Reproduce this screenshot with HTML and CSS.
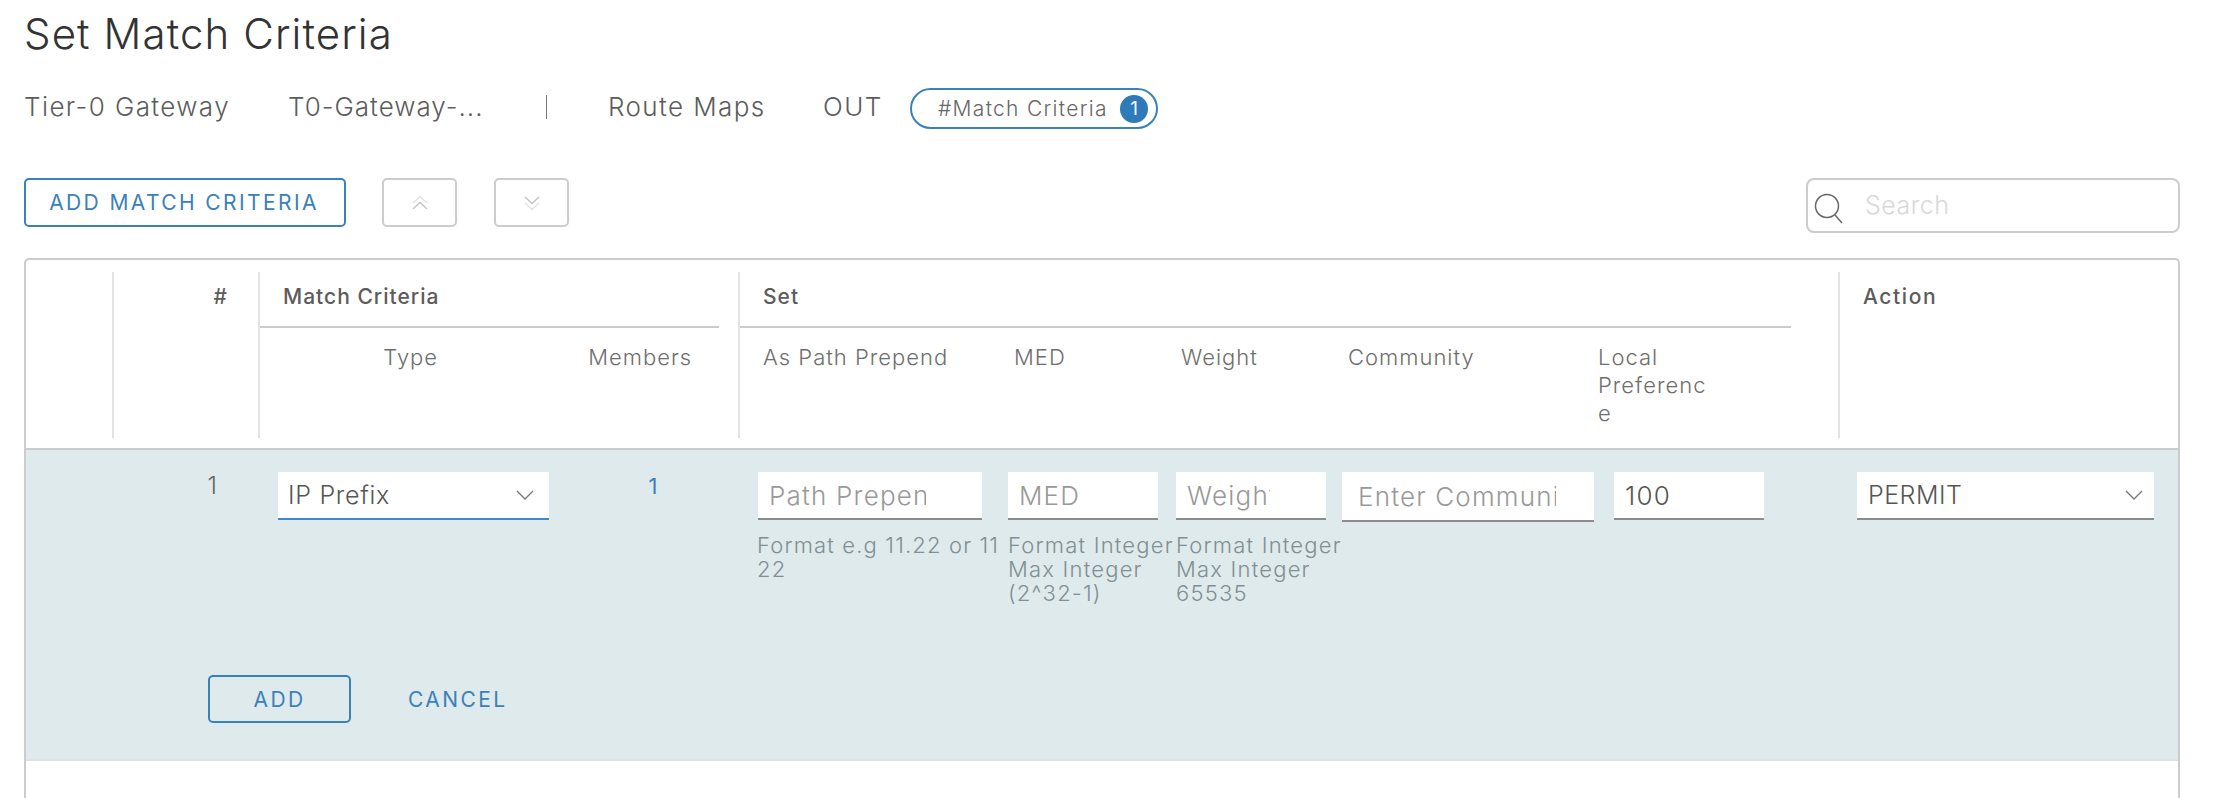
FILE: index.html
```html
<!DOCTYPE html>
<html lang="en">

<head>
    <meta charset="UTF-8" />
    <title>Set Match Criteria</title>
    <link rel="stylesheet" href="styles.css">
</head>

<body>
    <div class="page">
        <h1 class="title">Set Match Criteria</h1>

        <div class="crumbs">
            <span class="crumb crumb-type">Tier-0 Gateway</span>
            <span class="crumb crumb-name">T0-Gateway-...</span>
            <span class="crumb-sep"></span>
            <span class="crumb crumb-maps">Route Maps</span>
            <span class="crumb crumb-dir">OUT</span>
            <span class="pill">#Match Criteria<span class="pill-count">1</span></span>
        </div>

        <div class="toolbar">
            <button class="btn btn-add-criteria">ADD MATCH CRITERIA</button>
            <button class="btn-move" aria-label="Move up">
                <svg width="18" height="18" viewBox="0 0 18 18" fill="none" stroke-width="1.4">
                    <path d="M2 9 9 2.5 16 9" stroke="#e2e2e2" />
                    <path d="M2 15 9 8.5 16 15" stroke="#c4c4c4" />
                </svg>
            </button>
            <button class="btn-move" aria-label="Move down">
                <svg width="18" height="18" viewBox="0 0 18 18" fill="none" stroke-width="1.4">
                    <path d="M2 3 9 9.5 16 3" stroke="#c4c4c4" />
                    <path d="M2 9 9 15.5 16 9" stroke="#e2e2e2" />
                </svg>
            </button>
            <div class="search">
                <svg width="30" height="32" viewBox="0 0 30 32" fill="none" stroke="#666" stroke-width="1.5">
                    <circle cx="13" cy="13" r="11.5" />
                    <path d="M21 22 28 30" />
                </svg>
                <input class="search-input" type="text" placeholder="Search" />
            </div>
        </div>

        <div class="grid-box">
            <div class="thead cols">
                <div class="th"></div>
                <div class="th th-num"><span class="th-title">#</span></div>
                <div class="th th-group">
                    <div class="group-title th-title">Match Criteria</div>
                    <div class="group-cols">
                        <span class="sub-type">Type</span>
                        <span class="sub-members">Members</span>
                    </div>
                </div>
                <div class="th th-group th-set">
                    <div class="group-title th-title">Set</div>
                    <div class="group-cols">
                        <span class="sub-path">As Path Prepend</span>
                        <span class="sub-med">MED</span>
                        <span class="sub-weight">Weight</span>
                        <span class="sub-community">Community</span>
                        <span class="sub-local">Local Preference</span>
                    </div>
                </div>
                <div class="th th-action"><span class="th-title">Action</span></div>
            </div>

            <div class="edit-row">
                <div class="cols edit-cells">
                    <div></div>
                    <div class="cell-num">1</div>
                    <div class="cell-match">
                        <div class="select select-type">IP Prefix
                            <svg width="18" height="10" viewBox="0 0 18 10" fill="none" stroke="#777" stroke-width="1.3"><path d="M1 1 9 9 17 1" /></svg>
                        </div>
                        <a class="members-link">1</a>
                    </div>
                    <div class="cell-set">
                        <div class="field field-path">
                            <input type="text" placeholder="Path Prepend" />
                            <p class="help">Format e.g 11.22 or 11<br>22</p>
                        </div>
                        <div class="field field-med">
                            <input type="text" placeholder="MED" />
                            <p class="help">Format Integer<br>Max Integer<br>(2^32-1)</p>
                        </div>
                        <div class="field field-weight">
                            <input type="text" placeholder="Weight" />
                            <p class="help">Format Integer<br>Max Integer<br>65535</p>
                        </div>
                        <div class="field field-community">
                            <input type="text" placeholder="Enter Community" />
                        </div>
                        <div class="field field-local">
                            <input type="text" value="100" />
                        </div>
                    </div>
                    <div class="cell-action">
                        <div class="select select-action">PERMIT
                            <svg width="18" height="10" viewBox="0 0 18 10" fill="none" stroke="#777" stroke-width="1.3"><path d="M1 1 9 9 17 1" /></svg>
                        </div>
                    </div>
                </div>
                <div class="edit-actions">
                    <button class="btn btn-add">ADD</button>
                    <button class="btn-link">CANCEL</button>
                </div>
            </div>
        </div>
    </div>
</body>

</html>
```

FILE: styles.css
```css
* {
    box-sizing: border-box;
    margin: 0;
    padding: 0;
}

html,
body {
    height: 100%;
    overflow: hidden;
}

body {
    font-family: 'Inter', 'Liberation Sans', sans-serif;
    background-color: #ffffff;
    color: #666;
}

.page {
    height: 100%;
    display: flex;
    flex-direction: column;
    padding: 0 36px 0 24px;
}

.title {
    font-size: 42px;
    font-weight: 300;
    letter-spacing: 1.1px;
    line-height: 46px;
    color: #333;
    padding-top: 11px;
    height: 70px;
}

/* breadcrumb row */
.crumbs {
    display: flex;
    align-items: center;
    height: 41px;
    margin-top: 18px;
    font-size: 26px;
    font-weight: 300;
    letter-spacing: 1.4px;
    color: #5c5c5c;
}

.crumb {
    margin-bottom: 4px;
}

.crumb-type {
    width: 264px;
}

.crumb-name {
    width: 258px;
    letter-spacing: 1px;
}

.crumb-sep {
    width: 1px;
    height: 24px;
    background: #777;
    margin-right: 61px;
    margin-bottom: 4px;
}

.crumb-maps {
    width: 215px;
}

.crumb-dir {
    width: 87px;
}

.pill {
    display: flex;
    align-items: center;
    justify-content: space-between;
    width: 248px;
    height: 41px;
    padding: 0 8px 0 26px;
    border: 2px solid #3a81bb;
    border-radius: 21px;
    font-size: 21px;
    letter-spacing: 1.3px;
    color: #666;
}

.pill-count {
    width: 28px;
    height: 28px;
    border-radius: 50%;
    background: #2f7ab8;
    color: #fff;
    font-size: 19px;
    letter-spacing: 0;
    font-weight: 400;
    line-height: 28px;
    text-align: center;
}

/* toolbar */
.toolbar {
    display: flex;
    align-items: flex-start;
    margin-top: 49px;
    height: 80px;
}

button {
    font-family: inherit;
    background: none;
    cursor: pointer;
}

.btn {
    height: 49px;
    border: 2px solid #3a81bb;
    border-radius: 5px;
    color: #3a81bb;
    font-size: 21px;
    font-weight: 400;
    letter-spacing: 2.4px;
}

.btn-add-criteria {
    width: 322px;
    margin-right: 36px;
    padding-right: 2px;
}

.btn-move {
    display: flex;
    align-items: center;
    justify-content: center;
    width: 75px;
    height: 49px;
    border: 2px solid #ccc;
    border-radius: 5px;
    margin-right: 37px;
}

.search {
    display: flex;
    align-items: center;
    gap: 19px;
    width: 374px;
    height: 55px;
    margin-left: auto;
    padding-left: 6px;
    border: 2px solid #ccc;
    border-radius: 8px;
}

.search svg {
    flex: none;
    margin-top: 6px;
}

.search-input {
    width: 200px;
    border: none;
    outline: none;
    font-family: inherit;
    font-size: 25px;
    font-weight: 300;
    letter-spacing: 0.5px;
    margin-top: -2px;
    margin-left: 2px;
}

.search-input::placeholder {
    color: #d8d8d8;
}

/* criteria grid */
.grid-box {
    flex: 1;
    border: 2px solid #ccc;
    border-bottom: none;
    border-radius: 5px 5px 0 0;
}

.cols {
    display: grid;
    grid-template-columns: 86px 146px 480px 1100px 1fr;
}

.thead {
    padding: 12px 0 10px;
    border-bottom: 2px solid #ccc;
}

.th {
    height: 166px;
    border-left: 2px solid #e2e2e2;
    font-size: 22px;
    font-weight: 300;
    letter-spacing: 1px;
    color: #6e6e6e;
}

.thead .th:first-child {
    border-left: none;
}

.th-title {
    font-weight: 500;
    font-size: 21px;
    letter-spacing: 1px;
    color: #5c5c5c;
    line-height: 27px;
}

.th-num {
    padding: 11px 30px 0 0;
    text-align: right;
}

.th-action {
    padding: 11px 0 0 23px;
    letter-spacing: 1.6px;
}

.th-action .th-title {
    letter-spacing: 1.6px;
}

.th-group {
    padding-right: 19px;
}

.th-set {
    padding-right: 47px;
}

.group-title {
    height: 56px;
    padding: 11px 0 0 23px;
    border-bottom: 2px solid #ccc;
}

.group-cols {
    display: flex;
    padding-top: 15px;
    line-height: 28px;
}

.sub-type {
    width: 304px;
    text-align: center;
}

.sub-members {
    width: 159px;
    text-align: center;
}

.sub-path {
    margin-left: 23px;
    width: 251px;
}

.sub-med {
    width: 167px;
}

.sub-weight {
    width: 167px;
}

.sub-community {
    width: 250px;
}

.sub-local {
    width: 112px;
    overflow-wrap: anywhere;
}

/* row being edited */
.edit-row {
    background: #dfeaec;
    border-bottom: 2px solid #e2e2e2;
    height: 311px;
}

.edit-cells {
    height: 225px;
    padding-top: 22px;
    font-size: 24px;
    font-weight: 300;
}

.cell-num {
    text-align: right;
    padding: 0 41px 0 0;
    line-height: 28px;
}

.cell-match {
    display: flex;
    padding-left: 20px;
}

.select {
    display: flex;
    align-items: center;
    justify-content: space-between;
    height: 48px;
    background: #fff;
    color: #555;
    border-bottom: 2px solid #8c8c8c;
}

.select-type {
    width: 271px;
    padding: 0 15px 0 10px;
    font-size: 25px;
    letter-spacing: 0.7px;
    border-bottom-color: #3d8cc4;
}

.select-action {
    width: 297px;
    padding: 0 11px;
    font-size: 25px;
    letter-spacing: 0.5px;
}

.members-link {
    width: 90px;
    margin-left: 59px;
    color: #3a81bb;
    font-weight: 400;
    font-size: 22px;
    line-height: 28px;
    text-align: center;
}

.cell-set {
    display: flex;
    padding-left: 20px;
}

.field {
    flex: none;
}

.field input {
    display: block;
    width: 100%;
    height: 48px;
    border: none;
    border-bottom: 2px solid #8c8c8c;
    outline: none;
    font-family: inherit;
    font-size: 26px;
    font-weight: 300;
    letter-spacing: 1.2px;
    color: #555;
    background: #fff;
    padding: 0 56px 0 11px;
}

.field input::placeholder {
    color: #999;
}

.field-path {
    width: 224px;
    margin-right: 26px;
}

.field-med {
    width: 150px;
    margin-right: 18px;
}

.field-weight {
    width: 150px;
    margin-right: 16px;
}

.field-community {
    width: 252px;
    margin-right: 20px;
}

.field-community input {
    height: 50px;
    padding: 0 38px 0 16px;
}

.field-local {
    width: 150px;
}

.help {
    margin-top: 13px;
    font-size: 22px;
    font-weight: 300;
    letter-spacing: 1.2px;
    line-height: 24px;
    color: #7f8f93;
    white-space: nowrap;
}

.field-path .help {
    margin-left: -1px;
    letter-spacing: 1.15px;
}

.cell-action {
    padding-left: 19px;
}

.edit-actions {
    display: flex;
    align-items: center;
    padding-left: 182px;
    gap: 57px;
}

.btn-add {
    width: 143px;
    height: 48px;
}

.btn-link {
    border: none;
    color: #3a81bb;
    font-size: 21px;
    letter-spacing: 2.4px;
}
```
